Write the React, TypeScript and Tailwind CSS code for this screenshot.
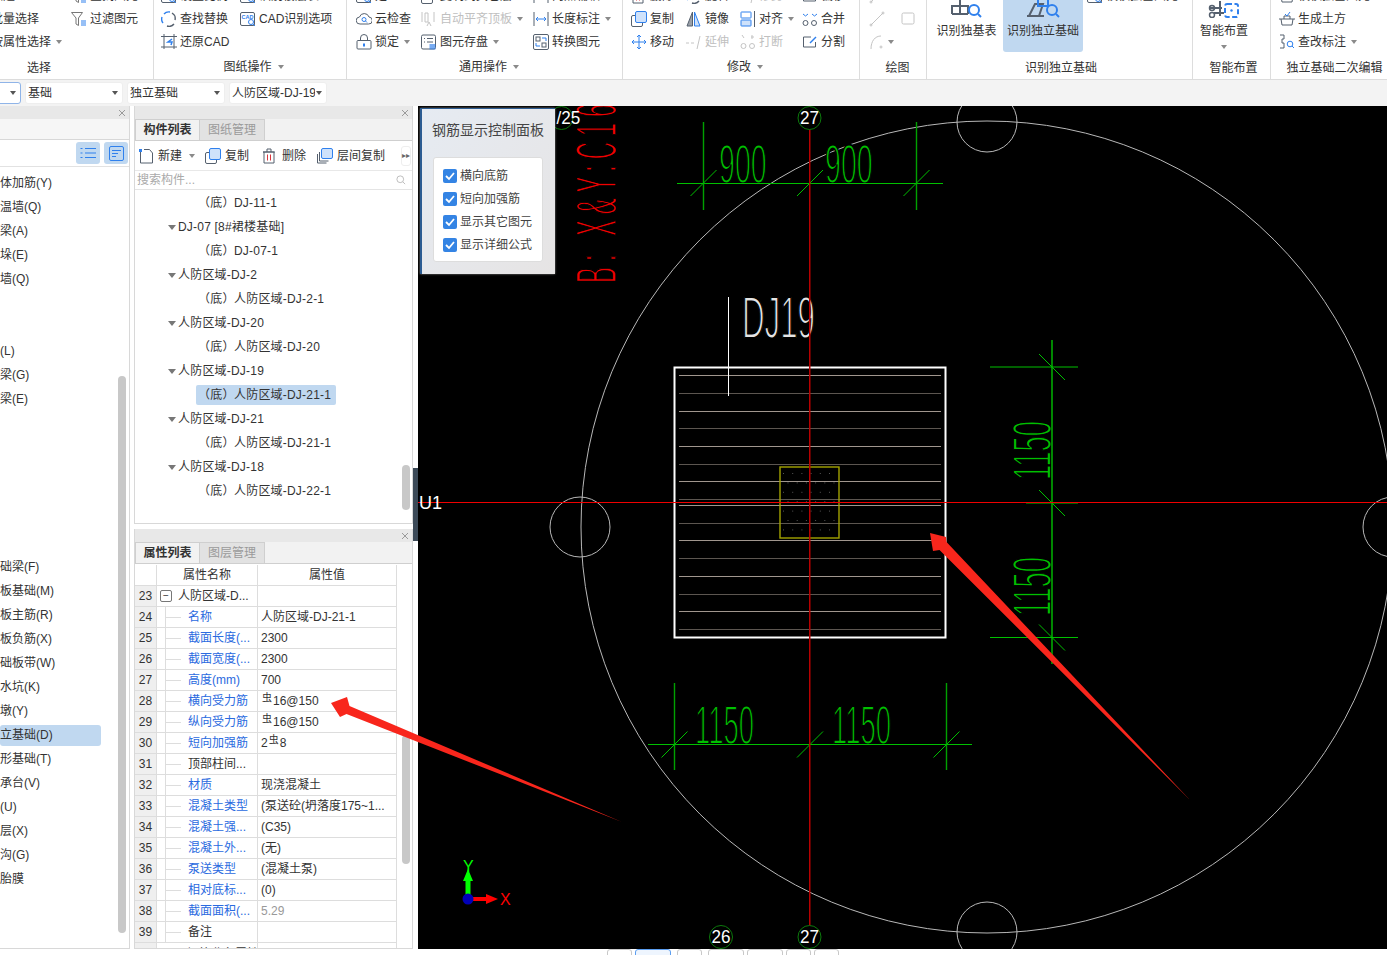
import type { ReactNode } from "react";

const G = "#55606e";
const B = "#2f80ed";
const D = "#c4c4c4";

function Ico({ children, size = 16, box = 16 }: { children: ReactNode; size?: number; box?: number }) {
  return (
    <svg width={size} height={size} viewBox={`0 0 ${box} ${box}`} fill="none" strokeWidth="1" className="shrink-0">
      {children}
    </svg>
  );
}

const icons: Record<string, ReactNode> = {
  funnel: (
    <>
      <path d="M0.5 1.5h11L7.5 7v7.5L5 13V7z" stroke="#777" />
      <path d="M10 10h5M10 12h5M10 14h5" stroke={B} />
    </>
  ),
  replace: (
    <>
      <path d="M3 3a6.5 6.5 0 0 1 6-2M2 12a6.5 6.5 0 0 1-1-6" stroke={B} strokeWidth="1.4" />
      <path d="M11 2a6.5 6.5 0 0 1 3 7M13 13a6.5 6.5 0 0 1-7 2" stroke={G} strokeWidth="1.4" />
    </>
  ),
  cad: (
    <>
      <rect x="0.5" y="1.5" width="14" height="13" rx="1.5" stroke={G} />
      <text x="1.6" y="7.5" fontSize="5.5" fontWeight="700" fill={B}>CAD</text>
      <circle cx="11" cy="11" r="2.5" stroke={B} />
      <path d="M13 13l2 2" stroke={B} />
    </>
  ),
  restore: (
    <>
      <path d="M3 0v15M13 0v15M0 2.5h16M0 13h16" stroke={G} />
      <path d="M11 5L7 8l4 0-1 3" stroke={B} strokeWidth="1.5" />
    </>
  ),
  cloud: (
    <>
      <path d="M4 13a3.5 3.5 0 0 1-.5-7A5 5 0 0 1 13 6a3.5 3.5 0 0 1-.5 7z" stroke={G} />
      <circle cx="8" cy="8.5" r="2" stroke={B} />
      <path d="M9.5 10l1.5 1.5" stroke={B} />
    </>
  ),
  lock: (
    <>
      <rect x="1" y="6.5" width="14" height="8.5" rx="1" stroke={G} />
      <path d="M4.5 6.5V4a3.5 3.5 0 0 1 7 0v2.5" stroke={G} />
      <rect x="7" y="9.5" width="2" height="3" fill={B} />
    </>
  ),
  flat: (
    <>
      <path d="M1 1v10M13 1v10M4 2h3v9H4z" stroke={D} />
      <path d="M6 15l2-4 2 4" stroke={D} />
    </>
  ),
  save: (
    <>
      <rect x="0.5" y="1" width="14" height="14" rx="1.5" stroke={G} />
      <path d="M3 4.5h1M6 4.5h6M3 8h1M6 8h6" stroke={G} />
      <rect x="8.5" y="10" width="6" height="5.5" fill={B} opacity="0.65" />
    </>
  ),
  dim: (
    <>
      <path d="M1 1v14M15 1v14" stroke={G} />
      <path d="M3 8h10M3 8l2-2M3 8l2 2M13 8l-2-2M13 8l-2 2" stroke={B} />
    </>
  ),
  convert: (
    <>
      <rect x="0.5" y="0.5" width="15" height="15" rx="1.5" stroke={G} />
      <rect x="3" y="3" width="4" height="4" stroke={G} />
      <rect x="9" y="9" width="4" height="4" stroke={G} />
      <path d="M9 4h4v3M7 12H3V9" stroke={B} />
    </>
  ),
  copy: (
    <>
      <rect x="0.5" y="4.5" width="11" height="11" rx="1.5" stroke={G} />
      <rect x="4.5" y="0.5" width="11" height="11" rx="1.5" fill="#cfe2fb" stroke={B} />
    </>
  ),
  mirror: (
    <>
      <path d="M6.5 1L1 15h5.5z" fill="#9aa0a8" stroke={G} />
      <path d="M8.5 1L14 15H8.5z" fill="#cfe2fb" stroke={B} />
    </>
  ),
  align: (
    <>
      <rect x="1" y="1" width="10" height="6" rx="0.5" stroke={B} />
      <rect x="1" y="9" width="10" height="6" rx="0.5" stroke={B} fill="#cfe2fb" />
      <path d="M14.5 0v16" stroke={G} />
    </>
  ),
  merge: (
    <>
      <circle cx="3.5" cy="12" r="2.5" stroke={G} />
      <circle cx="12" cy="12" r="2.5" stroke={G} />
      <path d="M1 3l2.5 2L6 3M10 3l2.5 2L15 3" stroke={B} />
    </>
  ),
  move: (
    <path d="M8 1v14M1 8h14M8 1L6 3M8 1l2 2M8 15l-2-2M8 15l2-2M1 8l2-2M1 8l2 2M15 8l-2-2M15 8l-2 2" stroke={B} />
  ),
  extend: <path d="M0 9h3M5 9h3M14 2l-3 13" stroke={D} />,
  breakIco: (
    <>
      <circle cx="3.5" cy="12" r="2.5" stroke={D} />
      <circle cx="12" cy="12" r="2.5" stroke={D} />
      <path d="M2 1l2 3M12 1v4M14 3h-3" stroke={D} />
    </>
  ),
  split: (
    <>
      <path d="M9 3H1.5v10h12V8" stroke={G} />
      <path d="M8 9l6-6" stroke={B} strokeWidth="1.4" />
    </>
  ),
  line: (
    <>
      <path d="M2 14L14 2" stroke={D} />
      <circle cx="2" cy="14" r="1" stroke={D} />
      <circle cx="14" cy="2" r="1" stroke={D} />
    </>
  ),
  rect: <rect x="1" y="2" width="12" height="11" rx="1.5" stroke={D} />,
  arc: (
    <>
      <path d="M2 15C2 7 6 2 12 2" stroke={D} />
      <circle cx="12" cy="13" r="1" stroke={D} />
    </>
  ),
  earth: (
    <>
      <path d="M0 8h16M2 8l1 6h10l1-6M5 8V5h6v3" stroke={G} />
      <path d="M6 3l2 2 3-4" stroke={B} />
    </>
  ),
  note: (
    <>
      <path d="M1 1h4v4H3v4h2v5H1" stroke={G} />
      <circle cx="11" cy="10" r="2.8" stroke={B} />
      <path d="M13 12l2 2" stroke={B} />
    </>
  ),
  add: (
    <>
      <path d="M2.5 3v12h12V5l-3-3.5H6" stroke={G} />
      <path d="M1 1h3v3H1z" fill={B} />
    </>
  ),
  trash: (
    <>
      <path d="M2 4v11h10V4H1h12M5 4V1h4v3" stroke={G} />
      <path d="M5.5 6.5v6M8.5 6.5v6" stroke="#d9363e" />
    </>
  ),
  floors: (
    <>
      <path d="M0.5 6v9h9M2.5 4v9h9" stroke={G} />
      <rect x="4.5" y="0.5" width="11" height="10" rx="1.5" fill="#cfe2fb" stroke={B} />
    </>
  ),
  search: (
    <>
      <circle cx="7" cy="7" r="4.5" stroke="#aaa" />
      <path d="M10.5 10.5l3 3" stroke="#aaa" />
    </>
  ),
};

function Caret({ className = "" }: { className?: string }) {
  return <span className={`h-0 w-0 border-x-[3px] border-t-[4px] border-x-transparent border-t-[#8a8a8a] ${className}`} />;
}

function Item({ icon, label, caret, off }: { icon?: string; label: string; caret?: boolean; off?: boolean }) {
  return (
    <div className={`flex h-[23px] items-center gap-[3px] whitespace-nowrap ${off ? "text-[#c0c0c0]" : "text-[#333]"}`}>
      <Ico>{icon ? icons[icon] : null}</Ico>
      <span>{label}</span>
      {caret && <Caret className="ml-[2px]" />}
    </div>
  );
}

function Group({ className, label, caret, labelClass = "", children }: { className: string; label: string; caret?: boolean; labelClass?: string; children: ReactNode }) {
  return (
    <div className={`flex h-[80px] shrink-0 flex-col overflow-hidden ${className}`}>
      <div className="-mt-[16px] flex h-[69px] shrink-0">{children}</div>
      <div className={`flex h-[18px] items-center justify-center whitespace-nowrap text-[#333] ${caret ? "mt-[5px]" : "mt-[6px]"} ${labelClass}`}>
        {label}
        {caret && <Caret className="ml-[6px]" />}
      </div>
    </div>
  );
}

function Ribbon() {
  return (
    <div className="flex h-[80px] shrink-0 overflow-hidden border-b border-[#dcdcdc] bg-white">
      <Group className="w-[154px] border-r border-[#ddd]" label="选择" labelClass="w-[78px]">
        <div className="-ml-[28px] w-[99px]">
          <Item label="点选" />
          <Item label="批量选择" />
          <Item label="按属性选择" caret />
        </div>
        <div>
          <Item icon="funnel" label="查找图元" />
          <Item icon="funnel" label="过滤图元" />
        </div>
      </Group>
      <Group className="w-[193px] border-r border-[#ddd] pl-[7px]" label="图纸操作" caret>
        <div className="w-[79px]">
          <Item icon="cad" label="设置比例" />
          <Item icon="replace" label="查找替换" />
          <Item icon="restore" label="还原CAD" />
        </div>
        <div>
          <Item icon="cad" label="识别楼层表" />
          <Item icon="cad" label="CAD识别选项" />
        </div>
      </Group>
      <Group className="w-[276px] border-r border-[#ddd] pl-[9px]" label="通用操作" caret>
        <div className="w-[65px]">
          <Item icon="cad" label="定义" />
          <Item icon="cloud" label="云检查" />
          <Item icon="lock" label="锁定" caret />
        </div>
        <div className="w-[112px]">
          <Item icon="copy" label="复制到其它层" />
          <Item icon="flat" label="自动平齐顶板" caret off />
          <Item icon="save" label="图元存盘" caret />
        </div>
        <div>
          <Item icon="dim" label="两点辅轴" />
          <Item icon="dim" label="长度标注" caret />
          <Item icon="convert" label="转换图元" />
        </div>
      </Group>
      <Group className="w-[237px] border-r border-[#ddd] pl-[8px]" label="修改" caret>
        <div className="w-[55px]">
          <Item icon="trash" label="删除" />
          <Item icon="copy" label="复制" />
          <Item icon="move" label="移动" />
        </div>
        <div className="w-[54px]">
          <Item icon="replace" label="旋转" />
          <Item icon="mirror" label="镜像" />
          <Item icon="extend" label="延伸" off />
        </div>
        <div className="w-[62px]">
          <Item icon="extend" label="修剪" off />
          <Item icon="align" label="对齐" caret />
          <Item icon="breakIco" label="打断" off />
        </div>
        <div>
          <Item icon="split" label="偏移" />
          <Item icon="merge" label="合并" />
          <Item icon="split" label="分割" />
        </div>
      </Group>
      <Group className="w-[67px] border-r border-[#ddd] pl-[9px]" label="绘图">
        <div>
          <div className="flex h-[23px] items-center gap-[16px]">
            <Ico>{icons.line}</Ico>
          </div>
          <div className="flex h-[23px] items-center gap-[16px]">
            <Ico>{icons.line}</Ico>
            <Ico>{icons.rect}</Ico>
          </div>
          <div className="flex h-[23px] items-center">
            <Ico>{icons.arc}</Ico>
            <Caret className="ml-[3px]" />
          </div>
        </div>
      </Group>
      <Group className="w-[266px] border-r border-[#ddd] pl-[3px]" label="识别独立基础">
        <div className="flex h-[68px] w-[73px] flex-col items-center text-[#333]">
          <svg width="34" height="34" viewBox="0 0 34 34" fill="none" className="mt-0">
            <path d="M2 30h16M2 30V22h16v8M10 14v16" stroke={G} strokeWidth="2" />
            <circle cx="24" cy="26" r="5" stroke={B} strokeWidth="2" />
            <path d="M28 30l3 3" stroke={B} strokeWidth="2" />
          </svg>
          <span className="mt-[7px] whitespace-nowrap">识别独基表</span>
        </div>
        <div className="flex h-[68px] w-[80px] flex-col items-center rounded-[3px] bg-[#c0d8f0] text-[#333]">
          <svg width="34" height="34" viewBox="0 0 34 34" fill="none" className="mt-0">
            <path d="M1 32h17M3 32l6-12h8l-4 12" stroke={G} strokeWidth="2" />
            <rect x="12" y="14" width="10" height="8" stroke={B} strokeWidth="2" />
            <circle cx="26" cy="26" r="5" stroke={B} strokeWidth="2" />
            <path d="M30 30l3 3" stroke={B} strokeWidth="2" />
          </svg>
          <span className="mt-[7px] whitespace-nowrap">识别独立基础</span>
        </div>
        <div className="ml-[4px]">
          <Item icon="cad" label="校核独基图元" />
        </div>
      </Group>
      <Group className="w-[78px] border-r border-[#ddd]" label="智能布置" labelClass="pl-[4px]">
        <div className="flex h-[68px] w-[62px] flex-col items-center text-[#333]">
          <svg width="32" height="34" viewBox="0 0 32 34" fill="none" className="mt-0">
            <path d="M2 24h12M6 29h10M12 17v15" stroke={G} strokeWidth="2" />
            <circle cx="4" cy="24" r="2.5" stroke={G} strokeWidth="1.5" />
            <circle cx="4" cy="31" r="2.5" stroke={G} strokeWidth="1.5" />
            <rect x="17" y="20" width="13" height="13" rx="2" stroke={B} strokeWidth="2" strokeDasharray="5 2.5" />
            <circle cx="23.5" cy="26.5" r="1.2" fill={B} />
          </svg>
          <span className="mt-[7px] whitespace-nowrap">智能布置</span>
          <Caret className="mt-[8px]" />
        </div>
      </Group>
      <Group className="w-[116px] pl-[8px]" label="独立基础二次编辑" labelClass="pl-[3px]">
        <div>
          <Item icon="earth" label="校核独基图元" />
          <Item icon="earth" label="生成土方" />
          <Item icon="note" label="查改标注" caret />
        </div>
      </Group>
    </div>
  );
}

function Select({ className, label, active }: { className: string; label: string; active?: boolean }) {
  return (
    <div className={`flex h-[22px] shrink-0 items-center justify-between rounded-[3px] border bg-white pl-[2px] pr-[4px] ${active ? "border-[#8fb4e8]" : "border-[#eeeeee]"} ${className}`}>
      <span className="overflow-hidden whitespace-nowrap text-[#333]">{label}</span>
      <Caret className="ml-[1px] shrink-0 border-t-[#555]" />
    </div>
  );
}

function CloseBar() {
  return (
    <div className="flex h-[13px] shrink-0 items-center justify-end bg-[#e8e8e8] pr-[3px] text-[#9a9a9a]">
      <svg width="8" height="8" viewBox="0 0 8 8" stroke="currentColor">
        <path d="M1 1l6 6M7 1L1 7" />
      </svg>
    </div>
  );
}

function Tabs({ a, b }: { a: string; b: string }) {
  return (
    <div className="flex h-[22px] shrink-0 border-b border-[#cfcfcf] bg-[#f2f2f2]">
      <div className="flex w-[65px] items-center justify-center border-x border-t border-[#cfcfcf] font-bold text-[#333]">{a}</div>
      <div className="flex w-[65px] items-center justify-center border-r border-t border-[#cfcfcf] bg-[#e2e2e2] text-[#9a9a9a]">{b}</div>
    </div>
  );
}

const sideRows = [
  "体加筋(Y)", "温墙(Q)", "梁(A)", "垛(E)", "墙(Q)", "", "", "(L)", "梁(G)", "梁(E)",
  "", "", "", "", "", "", "础梁(F)", "板基础(M)", "板主筋(R)", "板负筋(X)", "础板带(W)",
  "水坑(K)", "墩(Y)", "立基础(D)", "形基础(T)", "承台(V)", "(U)", "层(X)", "沟(G)", "胎膜",
];

function LeftPanel() {
  return (
    <div className="relative flex h-full w-[130px] shrink-0 flex-col overflow-hidden border-r border-b border-[#d8d8d8] bg-white">
      <CloseBar />
      <div className="h-[21px] shrink-0 border-b border-[#d8d8d8] bg-[#f6f6f6]" />
      <div className="flex h-[27px] shrink-0 items-center justify-end gap-[4px] border-b border-[#e2e2e2] pr-[1px]">
        <div className="flex h-[22px] w-[24px] items-center justify-center rounded-[3px] bg-[#c0d8f0]">
          <svg width="16" height="12" viewBox="0 0 16 12" stroke={B} fill="none">
            <path d="M5 1.5h11M5 6h11M5 10.5h11M0.5 1.5h2M0.5 6h2M0.5 10.5h2" />
          </svg>
        </div>
        <div className="flex h-[22px] w-[24px] items-center justify-center rounded-[3px] bg-[#c0d8f0]">
          <svg width="15" height="15" viewBox="0 0 15 15" stroke={B} fill="none">
            <rect x="0.5" y="0.5" width="14" height="14" rx="1.5" />
            <path d="M3 4.5h9M3 7.5h6M3 10.5h4" />
          </svg>
        </div>
      </div>
      <div className="pt-[4px] text-[#333]">
        {sideRows.map((t, i) => (
          <div key={i} className="flex h-[24px] items-center">
            <div className={`flex h-[21px] w-[101px] items-center rounded-[3px] whitespace-nowrap ${t === "立基础(D)" ? "bg-[#c0d8f0]" : ""}`}>{t}</div>
          </div>
        ))}
      </div>
      <div className="absolute left-[118px] top-[270px] h-[557px] w-[8px] rounded-[4px] bg-[#c8c8c8]" />
    </div>
  );
}

const treeRows: [number, string, string?][] = [
  [1, "DJ-11-1"],
  [0, "DJ-07 [8#裙楼基础]"],
  [1, "DJ-07-1"],
  [0, "人防区域-DJ-2"],
  [1, "人防区域-DJ-2-1"],
  [0, "人防区域-DJ-20"],
  [1, "人防区域-DJ-20"],
  [0, "人防区域-DJ-19"],
  [1, "人防区域-DJ-21-1", "sel"],
  [0, "人防区域-DJ-21"],
  [1, "人防区域-DJ-21-1"],
  [0, "人防区域-DJ-18"],
  [1, "人防区域-DJ-22-1"],
];

function ToolBtn({ icon, label, caret }: { icon: string; label: string; caret?: boolean }) {
  return (
    <div className="flex items-center gap-[4px] whitespace-nowrap text-[#333]">
      <Ico>{icons[icon]}</Ico>
      {label}
      {caret && <Caret className="ml-[3px]" />}
    </div>
  );
}

function ComponentPanel() {
  return (
    <div className="relative flex h-[418px] shrink-0 flex-col overflow-hidden border-x border-b border-[#d8d8d8] bg-white">
      <CloseBar />
      <Tabs a="构件列表" b="图纸管理" />
      <div className="flex h-[30px] shrink-0 items-center border-b border-[#e8e8e8] pl-[3px]">
        <div className="w-[67px]"><ToolBtn icon="add" label="新建" caret /></div>
        <div className="w-[57px]"><ToolBtn icon="copy" label="复制" /></div>
        <div className="w-[55px]"><ToolBtn icon="trash" label="删除" /></div>
        <ToolBtn icon="floors" label="层间复制" />
        <div className="ml-auto mr-[1px] flex h-[20px] w-[10px] items-center justify-center rounded-[3px] border border-[#eee] text-[8px] leading-none text-[#666]">▸▸</div>
      </div>
      <div className="flex h-[19px] shrink-0 items-center justify-between border-b border-[#e4e4e4] pl-[2px] pr-[5px] text-[#aaa]">
        搜索构件...
        <Ico size={12}>{icons.search}</Ico>
      </div>
      <div className="pt-[1px] text-[#333]">
        {treeRows.map(([lvl, text, sel], i) =>
          lvl === 0 ? (
            <div key={i} className="flex h-[24px] items-center pl-[33px]">
              <span className="mr-[2px] h-0 w-0 border-x-[4px] border-t-[5px] border-x-transparent border-t-[#777]" />
              <span className="tracking-[0.2px]">{text}</span>
            </div>
          ) : (
            <div key={i} className="flex h-[24px] items-center pl-[61px]">
              <div className={`flex h-[20px] items-center whitespace-nowrap rounded-[2px] pl-[2px] pr-[5px] tracking-[0.2px] ${sel ? "bg-[#c0d8f0]" : ""}`}>
                <span className="w-[36px]">（底）</span>
                {text}
              </div>
            </div>
          ),
        )}
      </div>
      <div className="absolute left-[267px] top-[359px] h-[45px] w-[8px] rounded-[4px] bg-[#c8c8c8]" />
    </div>
  );
}

type Prop = { n: number; name: string; val?: ReactNode; link?: boolean; muted?: boolean };

function Rebar() {
  return <span className="relative -top-[3px] mx-[1px] text-[10px] leading-none">虫</span>;
}

const props: Prop[] = [
  { n: 24, name: "名称", val: "人防区域-DJ-21-1", link: true },
  { n: 25, name: "截面长度(...", val: "2300", link: true },
  { n: 26, name: "截面宽度(...", val: "2300", link: true },
  { n: 27, name: "高度(mm)", val: "700", link: true },
  { n: 28, name: "横向受力筋", val: <><Rebar />16@150</>, link: true },
  { n: 29, name: "纵向受力筋", val: <><Rebar />16@150</>, link: true },
  { n: 30, name: "短向加强筋", val: <>2<Rebar />8</>, link: true },
  { n: 31, name: "顶部柱间..." },
  { n: 32, name: "材质", val: "现浇混凝土", link: true },
  { n: 33, name: "混凝土类型", val: "(泵送砼(坍落度175~1...", link: true },
  { n: 34, name: "混凝土强...", val: "(C35)", link: true },
  { n: 35, name: "混凝土外...", val: "(无)", link: true },
  { n: 36, name: "泵送类型", val: "(混凝土泵)", link: true },
  { n: 37, name: "相对底标...", val: "(0)", link: true },
  { n: 38, name: "截面面积(...", val: "5.29", link: true, muted: true },
  { n: 39, name: "备注" },
];

function PropertyPanel() {
  return (
    <div className="relative flex min-h-0 flex-1 flex-col overflow-hidden border-x border-b border-[#d8d8d8] bg-white">
      <CloseBar />
      <Tabs a="属性列表" b="图层管理" />
      <div className="mt-[1px] w-[262px] text-[#333]">
        <div className="flex h-[21px] border-b border-[#ddd]">
          <div className="w-[22px] border-r border-[#ddd]" />
          <div className="flex w-[101px] items-center justify-center border-r border-[#ddd]">属性名称</div>
          <div className="flex flex-1 items-center justify-center border-r border-[#ddd]">属性值</div>
        </div>
        <div className="flex h-[21px] border-b border-[#ddd]">
          <div className="flex w-[22px] items-center justify-center border-r border-[#ddd] bg-[#efefef]">23</div>
          <div className="flex w-[101px] items-center border-r border-[#ddd] pl-[3px]">
            <span className="mr-[6px] flex h-[12px] w-[12px] items-center justify-center rounded-[2px] border border-[#777] text-[10px] leading-none">−</span>
            人防区域-D...
          </div>
          <div className="flex-1 border-r border-[#ddd]" />
        </div>
        {props.map((p) => (
          <div key={p.n} className="flex h-[21px] border-b border-[#ddd]">
            <div className="flex w-[22px] items-center justify-center border-r border-[#ddd] bg-[#efefef]">{p.n}</div>
            <div className="flex w-[101px] items-center whitespace-nowrap border-r border-[#ddd] pl-[8px]">
              <span className="h-full border-l border-[#ddd]" />
              <span className="mr-[7px] w-[15px] border-t border-[#ddd]" />
              <span className={p.link ? "text-[#2a6ae0]" : ""}>{p.name}</span>
            </div>
            <div className={`flex flex-1 items-center whitespace-nowrap border-r border-[#ddd] pl-[3px] ${p.muted ? "text-[#999]" : ""}`}>{p.val}</div>
          </div>
        ))}
        <div className="flex h-[21px]">
          <div className="w-[22px] border-r border-[#ddd] bg-[#efefef]" />
          <div className="flex w-[101px] items-center overflow-hidden whitespace-nowrap border-r border-[#ddd] pl-[12px]">
            <span className="mr-[6px] h-[12px] w-[12px] shrink-0 rounded-[2px] border border-[#777]" />
            钢筋业务属性
          </div>
          <div className="flex-1 border-r border-[#ddd]" />
        </div>
      </div>
      <div className="absolute left-[267px] top-[206px] h-[129px] w-[8px] rounded-[4px] bg-[#c8c8c8]" />
    </div>
  );
}

// thin CAD lettering: a black stroke painted over the fill eats the glyph down to a hairline
function CadText({ x, y, sx, size, fill, rot, spacing, thin = 1.9, children }: { x: number; y: number; sx: number; size: number; fill: string; rot?: boolean; spacing?: number; thin?: number; children: string }) {
  return (
    <text
      transform={`translate(${x} ${y}) ${rot ? "rotate(-90)" : ""} scale(${sx} 1)`}
      fontSize={size}
      fill={fill}
      stroke="#000"
      strokeWidth={thin}
      letterSpacing={spacing}
      className="font-['Liberation_Sans']"
    >
      {children}
    </text>
  );
}

function Bubble({ x, y, label, tx = x }: { x: number; y: number; label: string; tx?: number }) {
  return (
    <g>
      <circle cx={x} cy={y} r="11.5" stroke="#0c7a0c" fill="#000" />
      <text x={tx} y={y + 6.5} textAnchor="middle" fontSize="19" fill="#fff" transform={`translate(${tx * 0.1} 0) scale(0.9 1)`} className="font-['Liberation_Sans']">
        {label}
      </text>
    </g>
  );
}

const rebarY = [375.5, 393.5, 411.5, 428.5, 446.5, 464.5, 481.5, 499.5, 505.5, 523.5, 540.5, 558.5, 576.5, 594.5, 611.5, 629.5];

const DIM = "#00c000";

function Dim({ x, y, back }: { x: number; y: number; back?: boolean }) {
  const d = back ? `M${x - 13} ${y - 13}L${x + 13} ${y + 13}` : `M${x - 13} ${y + 13}L${x + 13} ${y - 13}`;
  return <path d={d} stroke={DIM} />;
}

function CadView() {
  const dots: [number, number][] = [];
  for (let r = 0; r < 7; r++) {
    for (let c = 0; c < 6; c++) {
      dots.push([783 + c * 9.2 + (r % 2 ? 4.5 : 0), 473 + r * 9.4]);
    }
  }
  return (
    <div className="relative h-full min-w-0 flex-1 overflow-hidden bg-black">
      <svg width="969" height="843" viewBox="418 106 969 843" fill="none" className="block">
        <g stroke="#b8b8b8">
          <circle cx="987" cy="527" r="406" />
          <circle cx="987" cy="122" r="30" />
          <circle cx="987" cy="932" r="30" />
          <circle cx="580" cy="527" r="30" />
          <circle cx="1393" cy="527" r="30" />
        </g>
        {rebarY.map((y, i) => (
          <path key={y} d={`M679 ${y}H941`} stroke={i % 2 ? "#5c5650" : "#a0968e"} />
        ))}
        <rect x="674.5" y="367.5" width="271" height="270" stroke="#fff" strokeWidth="2" />
        <rect x="780" y="467" width="59" height="71" stroke="#a3a300" strokeWidth="1.4" />
        {dots.map(([x, y], i) => (
          <rect key={i} x={x} y={y} width="1" height="1" fill="#555" />
        ))}
        <path d="M728.5 297V396" stroke="#fff" />
        <CadText x={742} y={338} sx={0.53} size={59} fill="#e4e4e4">DJ19</CadText>

        <CadText x={719} y={183} sx={0.52} size={55} fill={DIM}>900</CadText>
        <CadText x={825} y={183} sx={0.52} size={55} fill={DIM}>900</CadText>
        <path d="M677 183.5H943" stroke={DIM} />
        <path d="M703.5 122V210M916.5 122V210" stroke="#00a000" strokeWidth="1.4" />
        <Dim x={703.5} y={183} />
        <Dim x={810} y={183} />
        <Dim x={916.5} y={183} />

        <CadText x={1051} y={480} sx={0.5} size={55} fill={DIM} rot>1150</CadText>
        <CadText x={1051} y={616} sx={0.5} size={55} fill={DIM} rot>1150</CadText>
        <path d="M1052 340V664" stroke={DIM} strokeWidth="1.4" />
        <path d="M990 367H1078M1026 503H1078M990 637.5H1078" stroke={DIM} strokeWidth="1.2" />
        <Dim x={1052} y={367} back />
        <Dim x={1052} y={503} back />
        <Dim x={1052} y={637.5} back />

        <CadText x={695} y={744} sx={0.5} size={55} fill={DIM}>1150</CadText>
        <CadText x={832} y={744} sx={0.5} size={55} fill={DIM}>1150</CadText>
        <path d="M648 744.5H972" stroke={DIM} />
        <path d="M674.5 683V770M946.5 683V770" stroke="#00a000" strokeWidth="1.4" />
        <Dim x={674.5} y={744.5} />
        <Dim x={810} y={744.5} />
        <Dim x={946.5} y={744.5} />

        <CadText x={616} y={283} sx={0.42} size={57} fill="#f00000" rot spacing={14}>B: X&amp;Y:C16</CadText>

        <Bubble x={561.5} y={118} label="/25" tx={568.5} />
        <path d="M809.75 106V949" stroke="#b80000" strokeWidth="1.5" />
        <path d="M418 502.5H1387" stroke="#f00000" />
        <Bubble x={809.5} y={118} label="27" />
        <Bubble x={721} y={937} label="26" />
        <Bubble x={809.5} y={937} label="27" />
        <text x="419" y="509" fontSize="18" fill="#fff" className="font-['Liberation_Sans']">U1</text>

        <path d="M468 895V880" stroke="#0f0" strokeWidth="5" />
        <path d="M463 881L468 869L473 881z" fill="#0f0" />
        <path d="M472 899H487" stroke="#f00" strokeWidth="4" />
        <path d="M486 894L498 899L486 904z" fill="#f00" />
        <circle cx="468" cy="899" r="5.5" fill="#0000b8" />
        <text x="463" y="872" fontSize="16" fill="#0f0" className="font-['Liberation_Sans']">Y</text>
        <text x="500" y="905" fontSize="16" fill="#f00" className="font-['Liberation_Sans']">X</text>
      </svg>

      <div className="absolute left-[2px] top-[2px] h-[166px] w-[135px] border-l-2 border-t border-[#2c5c92] bg-gradient-to-br from-[#e6ebf2] to-[#e6e4e4] shadow-[0_0_2px_#888]">
        <div className="mt-[13px] pl-[10px] text-[14px] leading-[16px] text-[#444]">钢筋显示控制面板</div>
        <div className="ml-[11px] mt-[19px] h-[105px] w-[110px] rounded-[3px] border border-[#ddd] bg-white pl-[9px] pt-[6px] text-[#444]">
          {["横向底筋", "短向加强筋", "显示其它图元", "显示详细公式"].map((t) => (
            <div key={t} className="flex h-[23px] items-center gap-[3px] whitespace-nowrap">
              <span className="flex h-[14px] w-[14px] items-center justify-center rounded-[2px] bg-[#3484e4]">
                <svg width="10" height="10" viewBox="0 0 10 10" fill="none" stroke="#fff" strokeWidth="1.8">
                  <path d="M1 5l3 3 5-6" />
                </svg>
              </span>
              {t}
            </div>
          ))}
        </div>
      </div>
    </div>
  );
}

export default function App() {
  return (
    <div className="relative flex h-[955px] w-[1387px] flex-col overflow-hidden bg-white font-['Liberation_Sans','Noto_Sans_CJK_SC',sans-serif] text-[12px] leading-none">
      <Ribbon />
      <div className="flex h-[26px] shrink-0 items-center gap-[4px] bg-[#f3f3f3]">
        <Select className="-ml-[60px] w-[81px]" label="" active />
        <Select className="w-[98px]" label="基础" />
        <Select className="w-[98px]" label="独立基础" />
        <Select className="w-[98px]" label="人防区域-DJ-19" />
      </div>
      <div className="flex h-[843px] shrink-0">
        <LeftPanel />
        <div className="flex h-full w-[283px] shrink-0 flex-col pl-[4px]">
          <ComponentPanel />
          <div className="h-[5px] shrink-0" />
          <PropertyPanel />
        </div>
        <div className="flex w-[5px] shrink-0 items-center">
          <div className="-mt-[47px] h-[73px] w-[5px] bg-[#3c4a58]" />
        </div>
        <CadView />
      </div>
      <div className="flex h-[6px] shrink-0 bg-white pl-[607px]">
        <div className="h-[8px] w-[25px] rounded-t-[3px] border border-[#c8c8c8]" />
        <div className="ml-[3px] h-[8px] w-[36px] rounded-t-[3px] border border-[#5c9ef0] bg-[#eef5fe]" />
        <div className="ml-[6px] h-[8px] w-[25px] rounded-t-[3px] border border-[#c8c8c8]" />
        <div className="ml-[6px] h-[8px] w-[36px] rounded-t-[3px] border border-[#c8c8c8]" />
        <div className="ml-[3px] h-[8px] w-[36px] rounded-t-[3px] border border-[#c8c8c8]" />
        <div className="ml-[3px] h-[8px] w-[25px] rounded-t-[3px] border border-[#c8c8c8]" />
        <div className="ml-[3px] h-[8px] w-[25px] rounded-t-[3px] border border-[#c8c8c8]" />
      </div>
      <svg width="1387" height="955" viewBox="0 0 1387 955" className="pointer-events-none absolute left-0 top-0">
        <path d="M331 703L347 697L349.5 706L622 822L346.5 714L340 717z" fill="#f8261c" />
        <path d="M930 533L946 537L946.5 542L1190 800L939.5 550L933 551z" fill="#f8261c" />
      </svg>
    </div>
  );
}
